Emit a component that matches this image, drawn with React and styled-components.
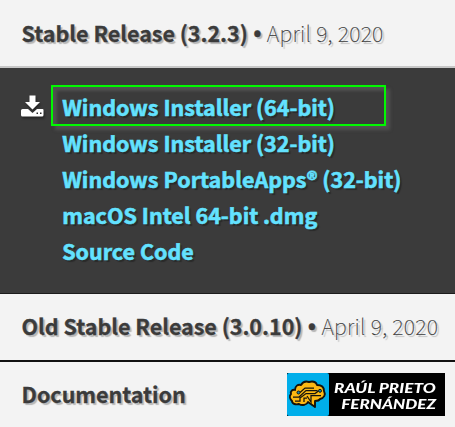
import React from 'react';
import styled, { createGlobalStyle } from 'styled-components';

const Global = createGlobalStyle`
  *, *::before, *::after { box-sizing: border-box; }
  body { margin: 0; background: #f3f3f3; overflow: hidden; }
`;

const Page = styled.main`
  width: 455px;
  height: 427px;
  display: flex;
  flex-direction: column;
  overflow: hidden;
  background: #f3f3f3;
  color: #3b3b3b;
  font-family: "Noto Sans CJK SC", "Open Sans", sans-serif;
  font-size: 21.5px;
  white-space: nowrap;
`;

const Header = styled.header`
  flex: none;
  height: ${(p) => p.$height}px;
  padding: 0 10px 0 21.6px;
  display: flex;
  align-items: center;
  justify-content: space-between;
  border-bottom: ${(p) => (p.$line ? `2px solid ${p.$line}` : '0')};
  text-shadow: 2px 2px 1px rgba(0, 0, 0, 0.25);
`;

const Title = styled.h2`
  margin: 0;
  padding-bottom: ${(p) => p.$lift || 0}px;
  display: flex;
  align-items: center;
  font-size: inherit;
  line-height: 36px;
  font-weight: 700;
  letter-spacing: -0.03px;
  -webkit-text-stroke: 0.3px currentColor;
`;

const Bullet = styled.span`
  width: 19px;
  text-align: center;
  font-family: "Noto Sans", sans-serif;
  font-size: 22px;
  line-height: 36px;
`;

const ReleaseDate = styled.span`
  font-weight: 100;
  letter-spacing: 0.24px;
  -webkit-text-stroke: 0.15px currentColor;
`;

const Downloads = styled.section`
  flex: none;
  height: 226px;
  padding: 17px 0 0 21px;
  display: grid;
  grid-template-columns: 30px 1fr;
  align-items: start;
  background: #3b3b3b;
  border-bottom: 1px solid #1c1c1c;
`;

const DownloadIcon = styled.svg`
  width: 23px;
  height: 22px;
  margin-top: 10px;
  fill: #fff;
  filter: drop-shadow(1px 2px 1px rgba(0, 0, 0, 0.4));
`;

const List = styled.ul`
  list-style: none;
  margin: 0;
  padding: 0;
`;

const Item = styled.li`
  height: 36px;
  padding-left: 11.2px;
  display: flex;
  align-items: center;
`;

const Selected = styled(Item)`
  width: 335px;
  height: 41px;
  padding: 2px 0 0 9.2px;
  border: 2px solid #00f800;
  box-shadow: 4px 4px 3px #515151, inset 4px 4px 3px #515151;
  margin-bottom: -1px;
`;

const Link = styled.a`
  color: #63e2ff;
  font-weight: 700;
  line-height: 36px;
  -webkit-text-stroke: 0.6px currentColor;
  text-shadow: 2px 2px 1px rgba(0, 0, 0, 0.3);
`;

const Brand = styled.div`
  width: 158px;
  height: 43px;
  display: flex;
  background: #000;
  text-shadow: none;
`;

const BrandMark = styled.svg`
  flex: none;
  width: 42px;
  height: 43px;
  background: #00aeea;
  border-radius: 2px;
`;

const BrandName = styled.div`
  flex: 1;
  padding: 7px 9.5px 0 0;
  color: #fff;
  font: italic 900 13.8px/15.5px Lato, sans-serif;
  display: flex;
  flex-direction: column;
  align-items: flex-end;
`;

const BrandLine = styled.div`
  transform: scaleX(${(p) => p.$stretch});
  transform-origin: right center;
`;

const links = [
  'Windows Installer (32-bit)',
  'Windows PortableApps® (32-bit)',
  'macOS Intel 64-bit .dmg',
  'Source Code',
];

function BrainCircuit() {
  return (
    <BrandMark viewBox="0 0 42 43">
      <path
        d="M14 12 C16 8.5 19 8 22 9 C26 8 29 9 30 12 C34 12 37 14 37 18 C39 22 37 25 33 26 C32 28 30 28 28 28 L28 34 L21 29 C20 32 15 33 12 31 C9 32 5 31 5 28 C3 26 2 23 4 21 C3 18 6 16 8 17 C8 13 11 11 14 12Z"
        fill="#fdb813" stroke="#15130c" strokeWidth="1.9" strokeLinejoin="round"
      />
      <path
        d="M13 19.5 L18 15 H27 M6 24 H12 L19 17.5 H30.5 M8 28 H13 V25 L19 20.5 H28 L31.5 18 M17 29 V25 H20 M20 23 L24 29 V22.5 H34"
        fill="none" stroke="#15130c" strokeWidth="1.25"
      />
      <circle cx="11.5" cy="19.5" r="1.5" fill="#168bb1" stroke="#15130c" />
      <circle cx="33" cy="17.8" r="1.5" fill="#168bb1" stroke="#15130c" />
    </BrandMark>
  );
}

export default function App() {
  return (
    <>
      <Global />
      <Page>
        <Header $height={68} $line="#c7c7c7">
          <Title $lift={1}>Stable Release (3.2.3)<Bullet>•</Bullet><ReleaseDate>April 9, 2020</ReleaseDate></Title>
        </Header>
        <Downloads>
          <DownloadIcon viewBox="0 0 23 22">
            <path d="M8.5 0.5H14.5V7H19L11.5 14.5L4 7H8.5Z" />
            <path fillRule="evenodd" d="M1.5 14H7L11.5 18L16 14H21.5Q22.5 14 22.5 15V20Q22.5 21.5 21 21.5H1.5Q0 21.5 0 20V15.5Q0 14 1.5 14ZM15.5 17.5V19H17V17.5ZM19 17.5V19H20.5V17.5Z" />
          </DownloadIcon>
          <List>
            <Selected><Link>Windows Installer (64-bit)</Link></Selected>
            {links.map((text) => (
              <Item key={text}><Link>{text}</Link></Item>
            ))}
          </List>
        </Downloads>
        <Header $height={68} $line="#111">
          <Title $lift={2}>Old Stable Release (3.0.10)<Bullet>•</Bullet><ReleaseDate>April 9, 2020</ReleaseDate></Title>
        </Header>
        <Header $height={65}>
          <Title $lift={2}>Documentation</Title>
          <Brand>
            <BrainCircuit />
            <BrandName>
              <BrandLine $stretch={1.245}>RAÚL PRIETO</BrandLine>
              <BrandLine $stretch={1.23}>FERNÁNDEZ</BrandLine>
            </BrandName>
          </Brand>
        </Header>
      </Page>
    </>
  );
}
